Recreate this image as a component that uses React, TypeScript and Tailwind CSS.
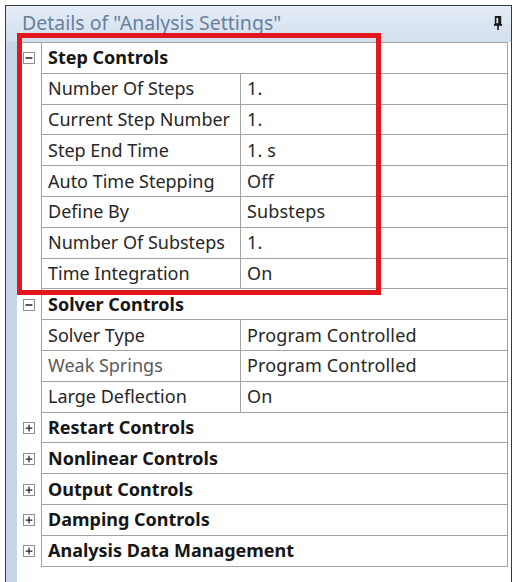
import { Minus, Plus } from 'lucide-react';

type Row =
  | { kind: 'group'; label: string; open: boolean }
  | { kind: 'prop'; label: string; value: string; dim?: boolean };

const rows: Row[] = [
  { kind: 'group', label: 'Step Controls', open: true },
  { kind: 'prop', label: 'Number Of Steps', value: '1.' },
  { kind: 'prop', label: 'Current Step Number', value: '1.' },
  { kind: 'prop', label: 'Step End Time', value: '1. s' },
  { kind: 'prop', label: 'Auto Time Stepping', value: 'Off' },
  { kind: 'prop', label: 'Define By', value: 'Substeps' },
  { kind: 'prop', label: 'Number Of Substeps', value: '1.' },
  { kind: 'prop', label: 'Time Integration', value: 'On' },
  { kind: 'group', label: 'Solver Controls', open: true },
  { kind: 'prop', label: 'Solver Type', value: 'Program Controlled' },
  { kind: 'prop', label: 'Weak Springs', value: 'Program Controlled', dim: true },
  { kind: 'prop', label: 'Large Deflection', value: 'On' },
  { kind: 'group', label: 'Restart Controls', open: false },
  { kind: 'group', label: 'Nonlinear Controls', open: false },
  { kind: 'group', label: 'Output Controls', open: false },
  { kind: 'group', label: 'Damping Controls', open: false },
  { kind: 'group', label: 'Analysis Data Management', open: false },
];

function Toggle({ open }: { open: boolean }) {
  return (
    <span className="flex h-[12px] w-[12px] items-center justify-center border border-[#8f8f8f] bg-white text-[#222]">
      {open ? <Minus className="h-[10px] w-[10px]" strokeWidth={3.5} /> : <Plus className="h-[10px] w-[10px]" strokeWidth={3} />}
    </span>
  );
}

function PinIcon() {
  return (
    <svg width="10" height="16" viewBox="0 0 10 16" className="text-[#1a1a1a]">
      <rect x="2" y="1" width="6" height="1.8" fill="currentColor" />
      <rect x="2.6" y="2" width="4.8" height="7" fill="none" stroke="currentColor" strokeWidth="1.6" />
      <rect x="5.2" y="3" width="1.8" height="6" fill="currentColor" />
      <rect x="1" y="9" width="8" height="1.8" fill="currentColor" />
      <rect x="4.2" y="10" width="1.6" height="5" fill="currentColor" />
    </svg>
  );
}

export default function App() {
  return (
    <div className="relative h-[582px] w-[515px] overflow-hidden bg-white font-['Noto_Sans',sans-serif]">
      <div className="ml-[5px] mt-[5px] flex h-[577px] w-[507px] flex-col border-l border-r border-t border-[#3a3a3a]">
        <div className="flex h-[36px] items-center justify-between bg-gradient-to-b from-[#e4edf8] to-[#d3dfed] pb-[2px] pl-[16px] pr-[8px]">
          <span className="text-[19.5px] text-[#6a7f9c]">Details of "Analysis Settings"</span>
          <PinIcon />
        </div>
        <div className="flex flex-1">
          <div className="w-[11px] bg-[#c7d5e8]" />
          <div className="flex-1 bg-white pr-[3px]">
            <div className="border-t border-[#a3a3a3]">
              {rows.map((r, i) => (
                <div key={i} className="flex h-[30.8px]">
                  <div className="flex w-[24px] items-center justify-center">
                    {r.kind === 'group' ? <Toggle open={r.open} /> : null}
                  </div>
                  <div className="flex flex-1 border-b border-l border-r border-[#a3a3a3]">
                    {r.kind === 'group' ? (
                      <div className="flex items-center pl-[6px] text-[18px] font-bold text-[#161616]">{r.label}</div>
                    ) : (
                      <>
                        <div
                          className={`flex w-[199px] items-center overflow-hidden whitespace-nowrap border-r border-[#a3a3a3] pl-[6px] text-[18px] ${
                            r.dim ? 'text-[#5a5a5a]' : 'text-[#262626]'
                          }`}
                        >
                          {r.label}
                        </div>
                        <div className="flex flex-1 items-center pl-[6px] text-[18px] tracking-[0.15px] text-[#262626]">
                          {r.value}
                        </div>
                      </>
                    )}
                  </div>
                </div>
              ))}
            </div>
          </div>
        </div>
      </div>
      <div className="pointer-events-none absolute left-[17px] top-[33px] h-[262px] w-[364px] border-[5px] border-[#e3161d]" />
    </div>
  );
}
